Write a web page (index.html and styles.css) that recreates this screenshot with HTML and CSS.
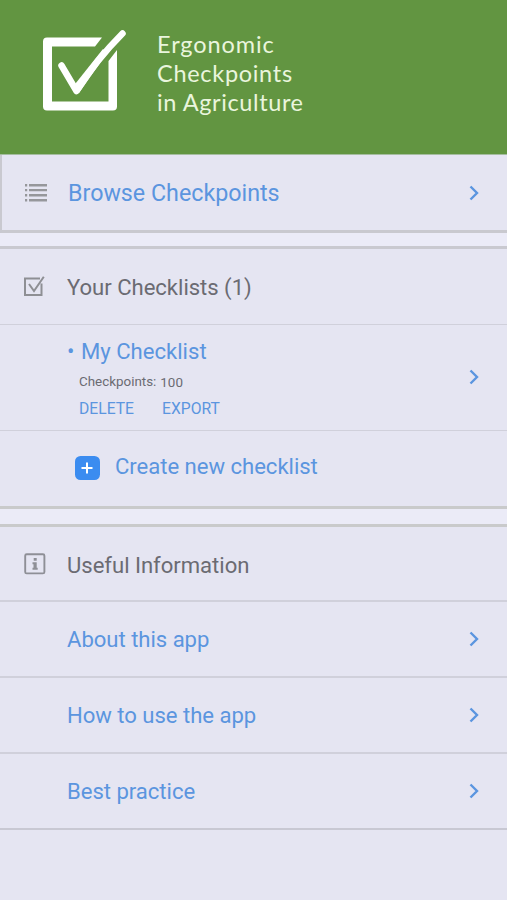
FILE: index.html
```html
<!DOCTYPE html>
<html lang="en">
<head>
<meta charset="utf-8">
<title>Ergonomic Checkpoints in Agriculture</title>
<link rel="stylesheet" href="styles.css">
</head>
<body>
<header class="banner">
  <svg class="logo" width="92" height="90" viewBox="0 0 92 90" fill="none" stroke="#fff">
    <path fill="#fff" stroke="none" fill-rule="evenodd" d="M67 12.500H12Q8 12.500 8 16.500V81.500Q8 85.500 12 85.500H78Q82 85.500 82 81.500V25L73.500 36V76.500H17V21.500H60Z"/>
    <path d="M26.500 40.500L41.500 66Q62 34 87.500 8.500" stroke-width="6.500" stroke-linecap="round" stroke-linejoin="round"/>
    <path fill="#fff" stroke="none" d="M38.500 61L68 24L72 28L44 68Z"/>
  </svg>
  <h1 class="title"><span class="t1">Ergonomic</span><span class="t2">Checkpoints</span><span class="t3">in Agriculture</span></h1>
</header>
<main>
  <a class="row browse">
    <svg class="icon" width="24" height="22" viewBox="0 0 24 22" fill="#96979b"><path d="M5 2h18v2.400H5zM5 6.900h18v2.400H5zM5 12h18v2.400H5zM5 17h18v2.400H5zM1 2h2.200v2.400H1zM1 6.900h2.200v2.400H1zM1 12h2.200v2.400H1zM1 17h2.200v2.400H1z"/></svg>
    <span class="label">Browse Checkpoints</span>
    <svg class="chev" width="12" height="18" viewBox="0 0 12 18"><path d="M2.500 2.500L9 9l-6.500 6.500"/></svg>
  </a>
  <section class="group lists">
    <div class="row head">
      <svg class="icon" width="24" height="24" viewBox="0 0 24 24" fill="none" stroke="#8e8f94" stroke-width="2"><path d="M17 3.500H2V20h16.500V8.500M6 9l5 7L20.800 1.800"/></svg>
      <h2 class="label">Your Checklists (1)</h2>
    </div>
    <div class="row item">
      <div class="body">
        <a class="name"><span class="dot">•</span>My Checklist</a>
        <p class="meta"><span>Checkpoints:</span><span class="count">100</span></p>
        <p class="actions"><a>DELETE</a><a>EXPORT</a></p>
      </div>
      <svg class="chev" width="12" height="18" viewBox="0 0 12 18"><path d="M2.500 2.500L9 9l-6.500 6.500"/></svg>
    </div>
    <a class="row create">
      <svg class="plus" width="25" height="24" viewBox="0 0 25 24"><rect width="25" height="24" rx="5.500" fill="#3b8cf0"/><path d="M12 6.500v11M6.500 12h11" stroke="#fff" stroke-width="2"/></svg>
      <span class="label">Create new checklist</span>
    </a>
  </section>
  <section class="group info">
    <div class="row head">
      <svg class="icon" width="24" height="24" viewBox="0 0 24 24" fill="none" stroke="#8e8f96"><rect x="2.200" y="2.200" width="19.200" height="19.200" rx="1.500" stroke-width="1.900"/><path d="M10.700 6h3v2.800h-3zM9.500 10.200h4.200v5.500h1v2H9.500v-2h1v-3.500h-1z" fill="#8e8f96" stroke="none"/></svg>
      <h2 class="label">Useful Information</h2>
    </div>
    <a class="row"><span class="label">About this app</span>
      <svg class="chev" width="12" height="18" viewBox="0 0 12 18"><path d="M2.500 2.500L9 9l-6.500 6.500"/></svg></a>
    <a class="row"><span class="label">How to use the app</span>
      <svg class="chev" width="12" height="18" viewBox="0 0 12 18"><path d="M2.500 2.500L9 9l-6.500 6.500"/></svg></a>
    <a class="row last"><span class="label">Best practice</span>
      <svg class="chev" width="12" height="18" viewBox="0 0 12 18"><path d="M2.500 2.500L9 9l-6.500 6.500"/></svg></a>
  </section>
</main>
</body>
</html>
```
FILE: styles.css
```css
* { box-sizing: border-box; }
body { margin: 0; min-height: 900px; background: #e5e5f2; font-family: Roboto, "Liberation Sans", sans-serif; color: #6b6b72; }
h1, h2, p { margin: 0; font-weight: 400; }
a { color: #5b95df; }
.banner { display: flex; height: 155px; background: #629541; border-bottom: 1px solid #a5bda0; padding: 25px 0 0 35px; }
.logo { flex: none; }
.title { margin: 5px 0 0 30px; font-family: Lato, sans-serif; font-size: 23.5px; line-height: 29px; color: #eaf5dd; letter-spacing: .6px; }
.title span { display: block; white-space: nowrap; }
.title .t1 { letter-spacing: .9px; }
.title .t2 { letter-spacing: .7px; }
main { background: #ebebf7; }
.row { display: flex; align-items: center; height: 76px; padding: 0 27px 0 67px; border-bottom: 2px solid #d0d0db; background: #e5e5f2; }
.label { flex: 1; font-size: 22.1px; line-height: 28px; letter-spacing: -.03px; white-space: nowrap; }
.icon { flex: none; margin: 0 20px 0 -44px; }
.chev { flex: none; fill: none; stroke: #5b95df; stroke-width: 2.4; }
.browse { height: 78px; border-left: 2px solid #c9c9d0; border-bottom: 3px solid #c9c9cf; padding-left: 66px; }
.browse .label { font-size: 23.25px; letter-spacing: 0; padding-top: 1px; }
.group { border-top: 3px solid #c9c9d0; }
.lists { margin-top: 13px; }
.lists .row { border-bottom-width: 1px; }
.lists .item { height: 106px; padding-bottom: 1px; }
.body { flex: 1; align-self: flex-start; padding-top: 12px; }
.name { display: block; font-size: 22.1px; line-height: 28px; }
.dot { display: inline-block; width: 14px; font-size: 22px; }
.meta { display: flex; margin: 7px 0 0 12px; font-size: 13.4px; line-height: 18px; }
.count { margin-left: 4px; position: relative; top: 1px; }
.actions { display: flex; gap: 28px; margin: 8px 0 0 12px; font-size: 15.7px; line-height: 20px; }
.create { padding-left: 75px; }
.lists .create { height: 78px; border-bottom: 3px solid #c9cacb; padding-bottom: 2px; }
.plus { flex: none; margin-right: 15px; }
.create .label { padding-bottom: 3px; }
.info { margin-top: 15px; border-top-color: #c9cacb; }
.info .head { height: 75px; }
.info .head .label { padding-top: 2px; }
.info .last { border-bottom-color: #c8c8d3; }
```
